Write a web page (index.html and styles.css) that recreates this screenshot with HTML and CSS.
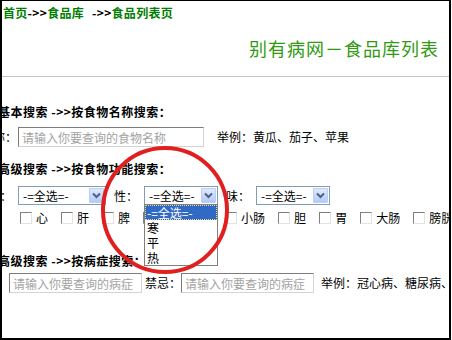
FILE: index.html
```html
<!DOCTYPE html>
<html lang="zh-CN">
<head>
    <meta charset="UTF-8">
    <meta name="viewport" content="width=device-width, initial-scale=1.0">
    <title>别有病网－食品库列表</title>
    <link rel="stylesheet" href="styles.css">
</head>
<body>
<div class="frame">
    <div class="top">
        <div class="crumb">
            <a href="#">首页</a>-&gt;&gt;<a href="#">食品库</a><span class="gap">-&gt;&gt;</span><a href="#">食品列表页</a>
        </div>
        <h1 class="title">别有病网－食品库列表</h1>
    </div>

    <div class="search">
        <h2 class="sub">基本搜索 -&gt;&gt;按食物名称搜索：</h2>
        <div class="row row-name">
            <span class="label">食物名称：</span>
            <input type="text" class="txt txt-name" placeholder="请输入你要查询的食物名称">
            <span class="tip">举例：黄瓜、茄子、苹果</span>
        </div>

        <h2 class="sub sub-mid">高级搜索 -&gt;&gt;按食物功能搜索：</h2>
        <div class="row row-func">
            <span class="label">功效：</span>
            <span class="combo combo-wide">
                <span class="combo-text">-=全选=-</span>
                <span class="combo-btn"><svg width="9" height="7" viewBox="0 0 9 7"><path d="M1 1.5 L4.5 5 L8 1.5" fill="none" stroke="#4d6185" stroke-width="2"/></svg></span>
            </span>
            <span class="label label-xing">性：</span>
            <span class="combo combo-open">
                <span class="combo-text">-=全选=-</span>
                <span class="combo-btn"><svg width="9" height="7" viewBox="0 0 9 7"><path d="M1 1.5 L4.5 5 L8 1.5" fill="none" stroke="#4d6185" stroke-width="2"/></svg></span>
                <span class="drop">
                    <span class="opt on">-=全选=-</span>
                    <span class="opt">寒</span>
                    <span class="opt">平</span>
                    <span class="opt">热</span>
                </span>
            </span>
            <span class="label label-wei">味：</span>
            <span class="combo combo-wei">
                <span class="combo-text">-=全选=-</span>
                <span class="combo-btn"><svg width="9" height="7" viewBox="0 0 9 7"><path d="M1 1.5 L4.5 5 L8 1.5" fill="none" stroke="#4d6185" stroke-width="2"/></svg></span>
            </span>
        </div>
        <div class="row row-organ">
            <span class="label">脏腑：</span>
            <label class="chk"><span class="box"></span>心</label>
            <label class="chk"><span class="box"></span>肝</label>
            <label class="chk"><span class="box"></span>脾</label>
            <label class="chk"><span class="box"></span>肺</label>
            <label class="chk"><span class="box"></span>肾</label>
            <label class="chk"><span class="box"></span>小肠</label>
            <label class="chk"><span class="box"></span>胆</label>
            <label class="chk"><span class="box"></span>胃</label>
            <label class="chk"><span class="box"></span>大肠</label>
            <label class="chk"><span class="box"></span>膀胱</label>
        </div>

        <h2 class="sub sub-last">高级搜索 -&gt;&gt;按病症搜索：</h2>
        <div class="row row-ill">
            <span class="label">病症名称：</span>
            <input type="text" class="txt txt-ill" placeholder="请输入你要查询的病症">
            <span class="label label-ji">禁忌：</span>
            <input type="text" class="txt txt-ji" placeholder="请输入你要查询的病症">
            <span class="tip tip-ill">举例：冠心病、糖尿病、高血压</span>
        </div>
    </div>

    <svg class="mark" width="452" height="340" viewBox="0 0 452 340">
        <ellipse cx="165" cy="210" rx="62" ry="62" fill="none" stroke="#e21f1f" stroke-width="4"/>
    </svg>
</div>
</body>
</html>
```

FILE: styles.css
```css
body {
    margin: 0;
    font-family: "Noto Sans CJK SC", "Liberation Sans", sans-serif;
    font-size: 12px;
    color: #000;
    background: #fff;
}

.frame {
    position: relative;
    width: 451px;
    height: 340px;
    box-sizing: border-box;
    border: 2px solid #000;
    border-top-width: 1px;
}

.top {
    border-bottom: 1px solid #c4c4c4;
    padding-bottom: 16px;
}

.crumb {
    padding: 4px 0 0 1px;
    line-height: 16px;
    font-weight: bold;
    letter-spacing: 0.3px;
    white-space: nowrap;
}

.crumb a {
    color: #008000;
    text-decoration: none;
}

.crumb .gap {
    margin-left: 8px;
}

.title {
    margin: 15px 0 0;
    padding-right: 10px;
    text-align: right;
    font-size: 18px;
    line-height: 24px;
    font-weight: normal;
    letter-spacing: 1px;
    color: #2f9a12;
}

.search {
    margin-left: -2px;
    overflow: hidden;
    height: 260px;
}

.sub {
    margin: 27px 0 0 -2px;
    font-size: 12px;
    line-height: 16px;
    font-weight: bold;
    letter-spacing: 0.5px;
    white-space: nowrap;
}

.sub-mid {
    margin-top: 14px;
}

.sub-last {
    margin-top: 27px;
}

.row {
    display: flex;
    align-items: center;
    white-space: nowrap;
}

.label,
.tip {
    flex: none;
    line-height: 16px;
}

.txt {
    flex: none;
    box-sizing: border-box;
    height: 20px;
    padding: 0 3px;
    border: 1px solid;
    border-color: #7c7c7c #d4d4d4 #d4d4d4 #7c7c7c;
    font: 12px "Noto Sans CJK SC", sans-serif;
    color: #000;
    background: #fff;
}

.txt::placeholder {
    color: #a3a3a3;
}

/* basic search */
.row-name {
    margin-top: 7px;
    height: 20px;
}

.row-name .label {
    margin-left: -43px;
}

.txt-name {
    width: 186px;
    margin-left: 1px;
}

.row-name .tip {
    margin-left: 13px;
}

/* function search */
.row-func {
    margin-top: 9px;
    height: 19px;
}

.row-func .label {
    margin-left: -24px;
}

.row-func .label-xing {
    margin-left: 8px;
}

.row-func .label-wei {
    margin-left: 8px;
}

.combo {
    flex: none;
    position: relative;
    display: flex;
    align-items: center;
    box-sizing: border-box;
    width: 74px;
    height: 19px;
    margin-left: 6px;
    border: 1px solid #7f9db9;
    background: #fff;
}

.combo-wide {
    width: 88px;
}

.combo-wei {
    margin-left: 6px;
}

.combo-text {
    flex: 1;
    padding-left: 4px;
    line-height: 17px;
}

.combo-btn {
    display: flex;
    align-items: center;
    justify-content: center;
    box-sizing: border-box;
    width: 15px;
    height: 15px;
    margin-right: 1px;
    border: 1px solid #b9cdf6;
    border-radius: 1px;
    background: linear-gradient(#dfe9fd, #b4caf6);
}

.combo-btn svg {
    display: block;
}

.drop {
    position: absolute;
    left: -1px;
    top: 17px;
    z-index: 2;
    width: 74px;
    box-sizing: border-box;
    border: 1px solid #808080;
    background: #fff;
}

.opt {
    display: block;
    padding-left: 2px;
    line-height: 15px;
}

.opt.on {
    background: #316ac5;
    color: #fff;
    outline: 1px dotted #e8d890;
    outline-offset: -1px;
}

/* organs */
.row-organ {
    margin-top: 5px;
    height: 16px;
}

.row-organ .label {
    margin-left: -29px;
}

.chk {
    flex: none;
    display: flex;
    align-items: center;
    margin-left: 13px;
    line-height: 16px;
}

.box {
    width: 12px;
    height: 12px;
    box-sizing: border-box;
    margin-right: 4px;
    border: 1px solid;
    border-color: #808080 #e2e2e2 #e2e2e2 #808080;
    background: #fff;
}

/* illness search */
.row-ill {
    margin-top: 4px;
    height: 20px;
}

.row-ill .label {
    margin-left: -51px;
}

.txt-ill,
.txt-ji {
    width: 133px;
}

.row-ill .label-ji {
    margin-left: 3px;
}

.row-ill .tip-ill {
    margin-left: 7px;
}

.mark {
    position: absolute;
    left: -2px;
    top: -1px;
    z-index: 3;
    pointer-events: none;
}
```
